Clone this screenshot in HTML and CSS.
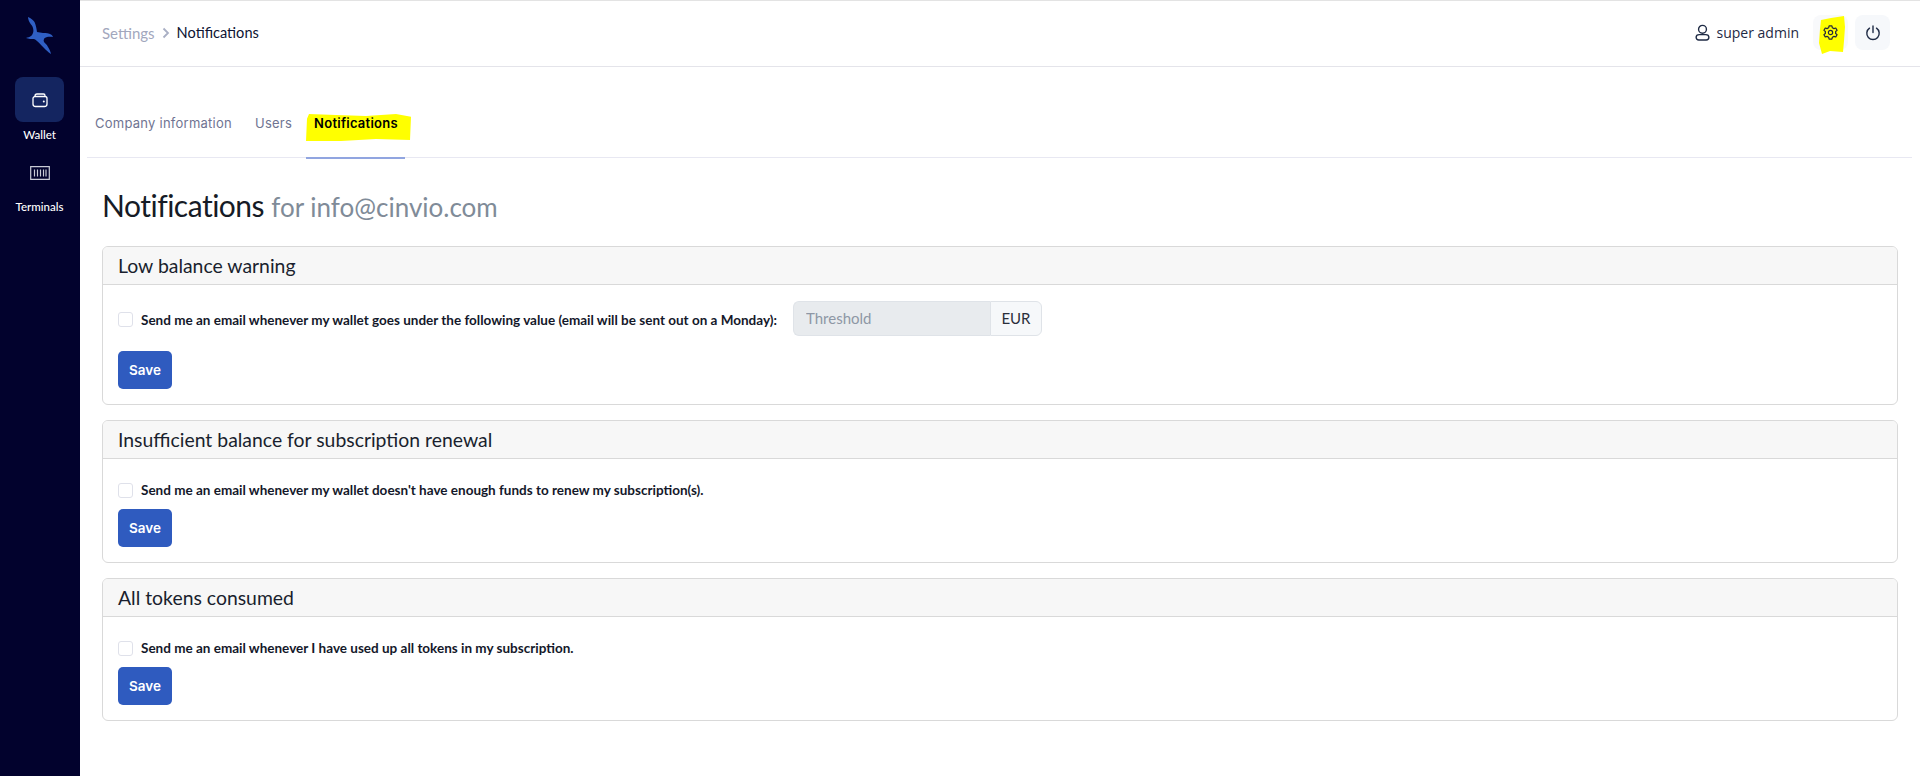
FILE: index.html
```html
<!DOCTYPE html>
<html lang="en">
<head>
<meta charset="utf-8">
<title>Notifications</title>
<link rel="stylesheet" href="styles.css">
</head>
<body>
<div class="app">
  <aside class="sidebar">
    <svg class="logo" viewBox="0 0 30 40" width="30" height="40" aria-label="logo"><path d="M4 2C7 3 9 5 10.500 7C12 10 12.500 14 13 17C15 17.500 17 17.500 19 18C22 18 25 18 27 19.500C28 20 28.500 21 29 22C27 21.500 25 21.500 23 22C21.500 22.500 20.500 23 20 24C19.500 25 19.500 26 20 27C21.500 28.500 23 30 24 32C25.500 34.500 26.500 36.500 27 39C25.500 38 23.500 36.500 22 35C20.500 33.500 19.500 32.500 18 31C16.500 29.500 15 27.500 13 26C12 25 11 24.500 10 24C7.500 24 4.500 24 2 23C4 22.500 5.500 22 7 21C8 20.500 8.500 19 9 18C9.500 16.500 9.500 15 9 13C8.500 11 7 9.500 6 8C5 6.500 4 4 4 2Z"/></svg>
    <nav class="side-nav">
      <a class="side-item">
        <span class="side-icon active">
          <svg viewBox="0 0 16 16" width="16" height="16"><path d="M3 4.500V4C3 2.800 4 2 5 2H11.500C12.500 2 13 2.800 13 3.500V4.500M3 4.500C2 4.500 1 5.500 1 6.500V12C1 13.500 2 14.500 3.500 14.500H12.500C14 14.500 15 13.500 15 12V6.500C15 5.300 14 4.500 13 4.500H3Z" fill="none" stroke="#fff" stroke-width="1.300"/><circle cx="11.800" cy="9.500" r="1" fill="#fff"/></svg>
        </span>
        <span class="side-label">Wallet</span>
      </a>
      <a class="side-item terminals">
        <span class="side-icon">
          <svg viewBox="0 0 20 14" width="20" height="14"><path d="M.7.700H19.300V13.300H.7Z" fill="none" stroke="#c9cbd6" stroke-width="1.200"/><path d="M4.500 3.500V10.500M7.500 3.500V10.500M10.500 3.500V10.500M13.500 3.500V10.500M16 3.500V10.500" stroke="#c9cbd6" stroke-width="1.200"/></svg>
        </span>
        <span class="side-label">Terminals</span>
      </a>
    </nav>
  </aside>
  <main class="main">
    <header class="topbar">
      <div class="crumbs">
        <span class="crumb-muted">Settings</span>
        <svg class="crumb-sep" viewBox="0 0 8 12" width="8" height="12"><path d="M1.500 1.500L6 6L1.500 10.500" fill="none" stroke="#a9afc4" stroke-width="1.800"/></svg>
        <span class="crumb-current">Notifications</span>
      </div>
      <div class="top-right">
        <svg class="user-icon" viewBox="0 0 16 16" width="17" height="17"><circle cx="8" cy="5" r="3.700" fill="none" stroke="#1e2a44" stroke-width="1.300"/><path d="M2 12.500C2 10.800 3.500 10 5 10H11C12.500 10 14 10.800 14 12.500C14 14 13 15 11.500 15H4.500C3 15 2 14 2 12.500Z" fill="none" stroke="#1e2a44" stroke-width="1.300"/></svg>
        <span class="user-name">super admin</span>
        <div class="icon-btn gear">
          <svg class="mark" viewBox="0 0 30 40" width="30" height="40"><path d="M5 5L15 3L28 1L29 12L28 26L27 37L14 36L6 39L3 28L4 14Z" fill="#ffff00"/></svg>
          <svg class="gear-icon" viewBox="0 0 16 16" width="15" height="15"><path d="M6.500 1H9.500L10 3L11.700 3.900L13.600 3.200L15 5.700L13.500 7V9L15 10.300L13.600 12.800L11.700 12.100L10 13L9.500 15H6.500L6 13L4.300 12.100L2.400 12.800L1 10.300L2.500 9V7L1 5.700L2.400 3.200L4.300 3.900L6 3Z" fill="none" stroke="#26293a" stroke-width="1.300" stroke-linejoin="round"/><circle cx="8" cy="8" r="2.300" fill="none" stroke="#26293a" stroke-width="1.300"/></svg>
        </div>
        <div class="icon-btn">
          <svg viewBox="0 0 16 16" width="16" height="16"><path d="M8 1V7.500" stroke="#1e2a44" stroke-width="1.400" stroke-linecap="round"/><path d="M4.500 3.200A6.200 6.200 0 1 0 11.500 3.200" fill="none" stroke="#1e2a44" stroke-width="1.400" stroke-linecap="round"/></svg>
        </div>
      </div>
    </header>

    <div class="tabs">
      <a class="tab">Company information</a>
      <a class="tab">Users</a>
      <a class="tab current">
        <svg class="mark" viewBox="0 0 105 30" width="105" height="29" preserveAspectRatio="none"><path d="M1 6L3 1L30 2L60 3L90 1L105 4L104 28L70 27L35 29L0 29Z" fill="#ffff00"/></svg>
        <span class="tab-text">Notifications</span>
      </a>
    </div>

    <div class="content">
      <h1 class="title">Notifications <small>for info@cinvio.com</small></h1>

      <section class="card">
        <h2 class="card-head">Low balance warning</h2>
        <div class="card-body first">
          <div class="row">
            <input class="check" type="checkbox" id="c1">
            <label class="label" for="c1">Send me an email whenever my wallet goes under the following value (email will be sent out on a Monday):</label>
            <div class="group">
              <input class="field" type="text" placeholder="Threshold" disabled>
              <span class="addon">EUR</span>
            </div>
          </div>
          <button class="save">Save</button>
        </div>
      </section>

      <section class="card">
        <h2 class="card-head">Insufficient balance for subscription renewal</h2>
        <div class="card-body">
          <div class="row">
            <input class="check" type="checkbox" id="c2">
            <label class="label" for="c2">Send me an email whenever my wallet doesn't have enough funds to renew my subscription(s).</label>
          </div>
          <button class="save">Save</button>
        </div>
      </section>

      <section class="card">
        <h2 class="card-head">All tokens consumed</h2>
        <div class="card-body">
          <div class="row">
            <input class="check" type="checkbox" id="c3">
            <label class="label" for="c3">Send me an email whenever I have used up all tokens in my subscription.</label>
          </div>
          <button class="save">Save</button>
        </div>
      </section>
    </div>
  </main>
</div>
</body>
</html>
```
FILE: styles.css
```css
* { box-sizing: border-box; }
html, body { margin: 0; height: 100%; }
body { font-family: "Lato", "Liberation Sans", sans-serif; background: #fff; color: #14182a; overflow: hidden; }
.app { display: flex; height: 776px; }

.sidebar { width: 80px; flex: none; background: #02022d; display: flex; flex-direction: column; align-items: center; padding-top: 15px; }
.logo { fill: #2f5fc4; display: block; margin-left: -2px; }
.side-nav { margin: 22px 0 0 -1px; display: flex; flex-direction: column; align-items: center; }
.side-item { display: flex; flex-direction: column; align-items: center; color: #fff; }
.side-icon { width: 49px; height: 45px; display: flex; align-items: center; justify-content: center; border-radius: 8px; }
.side-icon.active { background: #142560; }
.side-label { font-size: 11.500px; font-weight: 500; margin-top: 5px; line-height: 15px; }
.terminals { margin-top: 8px; }
.terminals .side-label { margin-top: 4px; }

.main { flex: 1; min-width: 0; border-top: 1px solid #e3e3e3; }
.topbar { height: 66px; border-bottom: 1px solid #e4e4ea; display: flex; align-items: center; justify-content: space-between; padding: 0 30px 2px 22px; }
.crumbs { display: flex; align-items: center; gap: 7px; font-size: 15px; }
.crumb-muted { color: #a2a7bd; }
.crumb-current { color: #0d1433; font-size: 14.600px; }
.top-right { display: flex; align-items: center; }
.user-name { font-size: 14px; color: #1e2a44; margin: 0 0 0 6px; font-family: "Open Sans", sans-serif; }
.user-icon { display: block; }
.icon-btn { position: relative; width: 35px; height: 35px; background: #f6f8fb; border-radius: 8px; display: flex; align-items: center; justify-content: center; margin-left: 7px; }
.gear { margin-left: 14px; background: #f8f9fb; }
.icon-btn .mark { position: absolute; left: 3px; top: 0; }
.gear-icon { position: relative; }

.tabs { margin-left: 7px; margin-right: 8px; height: 91px; border-bottom: 1px solid #e8e8f2; display: flex; align-items: flex-start; }
.tab { position: relative; height: 91px; padding: 47px 8px 0; font-family: "Inter", sans-serif; font-size: 13px; line-height: 18px; color: #6f7492; margin-right: 7px; letter-spacing: .25px; }
.tab.current { width: 99px; margin: 0 0 0 -1px; color: #000; font-weight: 600; border-bottom: 2px solid #91a5e0; height: 92px; }
.tab .mark { position: absolute; left: 0; top: 46px; }
.tab-text { position: relative; white-space: nowrap; }

.content { padding: 0 22px; }
.title { margin: 28px 0 19px; font-size: 30px; letter-spacing: -.5px; font-weight: 400; line-height: 39px; color: #161b26; }
.title small { font-size: 26px; color: #808b98; letter-spacing: 0; }

.card { border: 1px solid #d9d9d9; border-radius: 6px; margin-bottom: 15px; overflow: hidden; }
.card-head { margin: 0; height: 38px; background: #f7f7f7; border-bottom: 1px solid #d9d9d9; padding: 0 15px; font-size: 19.400px; font-weight: 400; line-height: 37px; color: #1a1f2e; }
.card-body { padding: 23px 15px 15px; }
.card-body.first { padding-top: 16px; padding-bottom: 15px; }
.row { display: flex; align-items: center; min-height: 16px; margin-bottom: 11px; }
.first .row { height: 35px; margin-bottom: 15px; }
.first .check, .first .label { margin-top: 2px; }
.check { appearance: none; margin: 0 8px 0 0; width: 15px; height: 15px; border: 1px solid #dfe1ea; border-radius: 3px; background: #fff; flex: none; }
.label { font-size: 13.500px; font-weight: 700; color: #14182a; }
.group { display: flex; margin-left: 16px; width: 249px; height: 35px; }
.field { flex: 1; min-width: 0; border: 1px solid #dfe3e8; border-right: 0; border-radius: 6px 0 0 6px; background: #e8ebee; padding: 0 12px 2px; font: 15px "Lato", sans-serif; }
.field::placeholder { color: #8e97a5; }
.addon { width: 52px; padding-bottom: 1px; background: #f6f8fa; border: 1px solid #dfe3e8; border-radius: 0 6px 6px 0; display: flex; align-items: center; justify-content: center; font-size: 15px; color: #2a2f3b; }
.save { display: block; width: 54px; height: 38px; border: 0; border-radius: 5px; background: #2f5bbf; color: #fff; font: 600 13.500px "Inter", sans-serif; padding: 0; }
```
